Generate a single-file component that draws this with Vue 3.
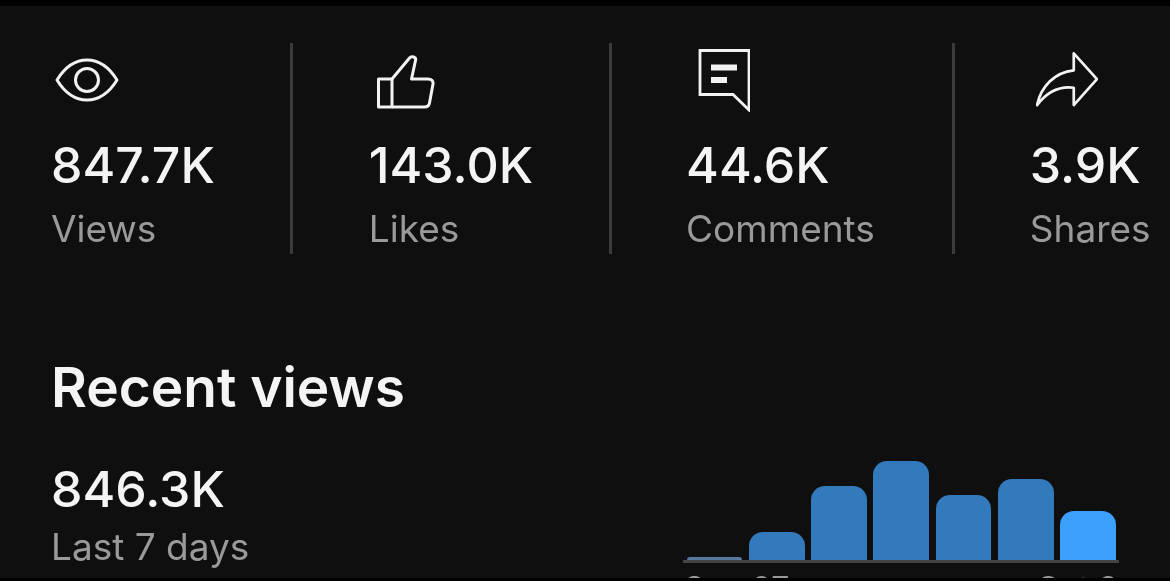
<template>
  <div class="screen">
    <div class="panel">
      <div class="stats">
        <div v-for="stat in stats" :key="stat.label" class="stat">
          <div class="stat-icon" :class="`icon-${stat.icon}`">
            <svg v-if="stat.icon === 'eye'" width="64" height="46" viewBox="0 0 64 46" fill="none" stroke="#f2f2f2" stroke-width="3">
              <path d="M2 23C10 10 20 3 32 3s22 7 30 20c-8 13-18 20-30 20S10 36 2 23Z" stroke-linejoin="round" />
              <circle cx="32" cy="23" r="11.500" />
            </svg>
            <svg v-else-if="stat.icon === 'like'" width="58" height="54" viewBox="0 0 58 54" fill="none" stroke="#f2f2f2" stroke-width="3" stroke-linejoin="round">
              <path d="M1.500 24H15v28H1.500Z" />
              <path d="M15 24 32.500 3c2-2.500 7-1 6 2.500L34.500 24H51c3.500 0 5.500 2 5 5l-3.500 19c-.5 2.500-2.500 4-5 4H15" />
            </svg>
            <svg v-else-if="stat.icon === 'comment'" width="52" height="64" viewBox="0 0 52 64" fill="none" stroke="#f2f2f2" stroke-width="2.800">
              <path d="M2 2.500h49v59.500L35 46.500H2Z" />
              <path d="M13 19.500h26M13 32h16" stroke-width="6" />
            </svg>
            <svg v-else width="62" height="56" viewBox="0 0 64 58" fill="none" stroke="#f2f2f2" stroke-width="2.800" stroke-linejoin="round">
              <path d="M39 1.500 63 28 39 55V37C23 35 10 43 1 55 5 36 19 21 39 19Z" />
            </svg>
          </div>
          <div class="stat-value">{{ stat.value }}</div>
          <div class="stat-label">{{ stat.label }}</div>
        </div>
      </div>

      <h2 class="section-title">Recent views</h2>

      <div class="recent">
        <div class="recent-text">
          <div class="stat-value">846.3K</div>
          <div class="recent-label">Last 7 days</div>
        </div>
        <div class="chart">
          <div class="bars">
            <div
              v-for="(bar, index) in bars"
              :key="index"
              class="bar"
              :class="{ today: index === bars.length - 1, empty: index === 0 }"
              :style="{ height: `${bar}px` }"
            ></div>
          </div>
          <div class="axis">
            <span>Sep 27</span>
            <span>Oct 3</span>
          </div>
        </div>
      </div>
    </div>
  </div>
</template>

<script setup>
const stats = [
  { icon: 'eye', value: '847.7K', label: 'Views' },
  { icon: 'like', value: '143.0K', label: 'Likes' },
  { icon: 'comment', value: '44.6K', label: 'Comments' },
  { icon: 'share', value: '3.9K', label: 'Shares' }
]

const bars = [3, 28, 74, 99, 65, 81, 49]
</script>

<style>
html, body {
  margin: 0;
  background: #000;
}
</style>

<style scoped>
.screen {
  height: 581px;
  padding: 6px 0 3px;
  box-sizing: border-box;
  background: #000;
  overflow: hidden;
  font-family: Inter, "Liberation Sans", sans-serif;
}

.panel {
  height: 572px;
  overflow: hidden;
  background: #0f0f10;
  padding-top: 37px;
  box-sizing: border-box;
  filter: blur(0.4px);
}

.stats {
  display: flex;
  padding-left: 51px;
}

.stat {
  height: 211px;
  padding: 0 77px 0 74px;
  border-right: 3px solid #3b3b3b;
}

.stat:first-child {
  padding: 0 75px 0 0;
}

.stat:nth-child(2) {
  padding: 0 76px;
}

.stat:last-child {
  border-right: none;
  padding: 0 0 0 75px;
}

.stat-icon {
  height: 74px;
  margin-bottom: 18px;
  display: flex;
  align-items: center;
}

.icon-eye {
  padding-left: 4px;
}

.icon-like {
  padding-left: 8px;
  padding-top: 3px;
  height: 71px;
}

.icon-comment {
  padding-left: 12px;
}

.icon-share {
  padding-left: 6px;
}

.stat-value {
  font-size: 50px;
  line-height: 60px;
  font-weight: 550;
  color: #f4f4f4;
  white-space: nowrap;
}

.stat-label {
  margin-top: 12px;
  font-size: 37px;
  line-height: 44px;
  color: #9a9a9a;
  white-space: nowrap;
}

.section-title {
  margin: 100px 0 0 51px;
  font-size: 55px;
  line-height: 66px;
  font-weight: 600;
  color: #f4f4f4;
}

.recent {
  display: flex;
  justify-content: space-between;
  padding: 0 51px 0 51px;
}

.recent-text {
  padding-top: 39px;
}

.recent-label {
  margin-top: 6px;
  font-size: 37px;
  line-height: 44px;
  color: #9a9a9a;
  white-space: nowrap;
}

.chart {
  width: 436px;
  margin-top: 40px;
}

.bars {
  height: 100px;
  display: flex;
  align-items: flex-end;
  gap: 6.400px;
  padding: 0 3px 0 3.500px;
  border-bottom: 3px solid #444;
}

.bar {
  width: 56px;
  border-radius: 14px 14px 0 0;
  background: #327abb;
}

.bar.today {
  background: #3d9ffc;
}

.bar.empty {
  border-radius: 4px 4px 0 0;
  background: #56789c;
}

.axis {
  display: flex;
  justify-content: space-between;
  margin-top: 7px;
  padding: 0 1px;
  font-size: 32px;
  line-height: 38px;
  color: #9a9a9a;
}
</style>
